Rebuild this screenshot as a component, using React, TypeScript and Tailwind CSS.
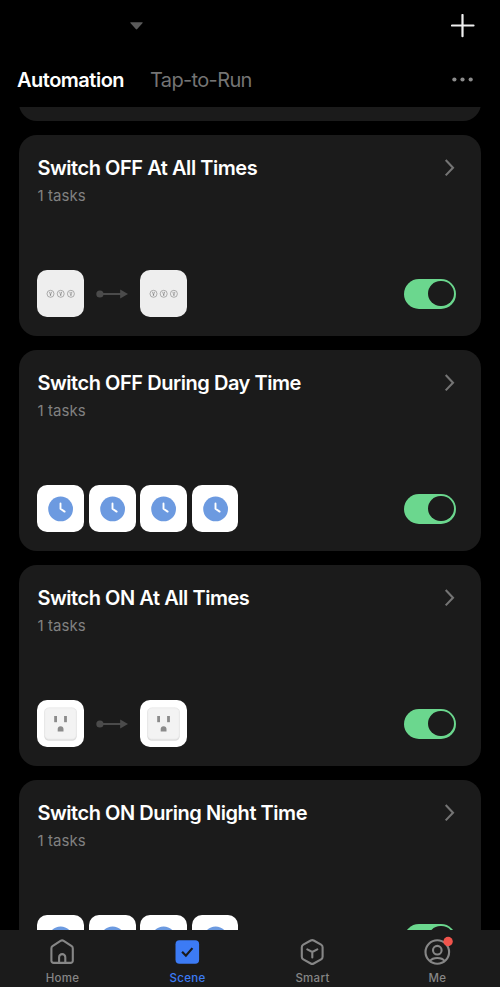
import { useState } from 'react'
import type { ReactNode } from 'react'
import { clsx } from 'clsx'

type TileKind = 'strip' | 'clock' | 'outlet'

interface Scene {
  id: string
  title: string
  tasks: number
  kind: TileKind
}

const SCENES: Scene[] = [
  { id: 'off-all', title: 'Switch OFF At All Times', tasks: 1, kind: 'strip' },
  { id: 'off-day', title: 'Switch OFF During Day Time', tasks: 1, kind: 'clock' },
  { id: 'on-all', title: 'Switch ON At All Times', tasks: 1, kind: 'outlet' },
  { id: 'on-night', title: 'Switch ON During Night Time', tasks: 1, kind: 'clock' },
]

function StripIcon() {
  return (
    <svg width="47" height="47" viewBox="0 0 47 47" fill="none">
      {[13.5, 23.7, 33.9].map((cx) => (
        <g key={cx}>
          <circle cx={cx} cy="23.8" r="3.5" stroke="#989898" strokeWidth="0.8" />
          <path d={`M${cx - 0.8} 21.900v1.600M${cx + 0.8} 21.900v1.600`} stroke="#999" strokeWidth="0.9" />
          <path d={`M${cx} 23.500v2.300`} stroke="#888" strokeWidth="1.2" />
        </g>
      ))}
    </svg>
  )
}

function ClockIcon() {
  return (
    <svg width="47" height="47" viewBox="0 0 47 47" fill="none">
      <circle cx="23.6" cy="23.9" r="12.4" fill="#6c9ae0" />
      <path d="M23.500 18.500v5.300l4.100 2.800" stroke="#fff" strokeWidth="1.9" strokeLinecap="round" strokeLinejoin="round" />
    </svg>
  )
}

function OutletIcon() {
  return (
    <svg width="47" height="47" viewBox="0 0 47 47" fill="none">
      <rect x="7.3" y="8" width="32.4" height="32.8" rx="4.5" fill="#dedede" />
      <rect x="7.6" y="7.8" width="31.8" height="31.4" rx="4.5" fill="#f3f3f3" stroke="#e6e6e6" strokeWidth="0.7" />
      <rect x="17.2" y="16" width="2.800" height="6.200" fill="#8b8b8b" />
      <rect x="27.1" y="16" width="2.800" height="6.200" fill="#8b8b8b" />
      <path d="M20.700 31.400v-2.300a2.900 2.900 0 0 1 5.800 0v2.300z" fill="#8b8b8b" />
    </svg>
  )
}

function Tile({ kind }: { kind: TileKind }) {
  return (
    <div
      className={clsx(
        'h-[47px] w-[46.8px] shrink-0 overflow-hidden rounded-[10px]',
        kind === 'strip' ? 'bg-[#eeeeee]' : 'bg-white'
      )}
    >
      {kind === 'strip' && <StripIcon />}
      {kind === 'clock' && <ClockIcon />}
      {kind === 'outlet' && <OutletIcon />}
    </div>
  )
}

function Arrow() {
  return (
    <svg width="32" height="12" viewBox="0 0 32 12" fill="#4b4b4b">
      <circle cx="3.9" cy="6" r="3.6" />
      <rect x="5" y="5" width="20" height="2" />
      <path d="M24.2 1.4v9.2l7.8-4.6z" />
    </svg>
  )
}

function Toggle({ on, onChange }: { on: boolean; onChange: () => void }) {
  return (
    <button
      role="switch"
      aria-checked={on}
      onClick={onChange}
      className={clsx(
        'flex h-[30px] w-[52.5px] items-center rounded-full px-[2.3px]',
        on ? 'justify-end bg-[#6bd78e]' : 'justify-start bg-[#4b4b4b]'
      )}
    >
      <span className="size-[25.4px] rounded-full bg-[#1b1b1b]" />
    </button>
  )
}

function SceneCard({ scene }: { scene: Scene }) {
  const [on, setOn] = useState(true)

  return (
    <article className="flex h-[201px] shrink-0 flex-col justify-between rounded-[18px] bg-[#1b1b1b] pt-[20px] pr-[25px] pb-[19px] pl-[18.4px]">
      <div className="flex items-start justify-between">
        <div>
          <h2 className="text-[20px] leading-[26px] font-semibold tracking-[-0.45px] text-white">{scene.title}</h2>
          <p className="mt-[5px] text-[15px] leading-5 tracking-[0.1px] text-[#818181]">{scene.tasks} tasks</p>
        </div>
        <svg width="12" height="18" viewBox="0 0 12 18" fill="none" className="mt-1">
          <path d="M1.700 1.100 9 8.700l-7.300 7.700" stroke="#747474" strokeWidth="2.100" />
        </svg>
      </div>

      <div className="flex items-center justify-between">
        {scene.kind === 'clock' ? (
          <div className="flex gap-[4.6px]">
            {[0, 1, 2, 3].map((i) => (
              <Tile key={i} kind="clock" />
            ))}
          </div>
        ) : (
          <div className="flex items-center gap-3">
            <Tile kind={scene.kind} />
            <Arrow />
            <Tile kind={scene.kind} />
          </div>
        )}
        <Toggle on={on} onChange={() => setOn(!on)} />
      </div>
    </article>
  )
}

function NavItem({ label, active, children }: { label: string; active?: boolean; children: ReactNode }) {
  return (
    <button
      className={clsx(
        'flex flex-1 flex-col items-center pt-[8px]',
        active ? 'text-[#3c7bf5]' : 'text-[#868686]'
      )}
    >
      {children}
      <span className="mt-[5px] text-[11.5px] leading-[14px] font-medium tracking-[0.3px]">{label}</span>
    </button>
  )
}

export default function App() {
  return (
    <div className="flex h-[987px] w-[500px] flex-col overflow-hidden bg-black font-['Inter',sans-serif]">
      <header className="flex h-[107px] shrink-0 flex-col">
        <div className="flex h-[52px] items-center justify-between pr-[25px] pl-[130px]">
          <svg width="13" height="8" viewBox="0 0 13 8" fill="#5a5a5a">
            <path d="M1 .3h11c.7 0 .9.5.4 1L7.200 7c-.4.5-1 .5-1.400 0L.6 1.300C.1.800.3.300 1 .300z" />
          </svg>
          <svg width="24" height="24" viewBox="0 0 24 24" stroke="#f0f0f0" strokeWidth="2.200" strokeLinecap="round">
            <path d="M11.500 1v21.200M1 11.500h21.500" />
          </svg>
        </div>
        <div className="flex h-[55px] items-center justify-between pr-[26px] pl-[17px]">
          <nav className="flex items-center gap-[26px] text-[20px] leading-6">
            <button className="font-semibold tracking-[-0.5px] text-white">Automation</button>
            <button className="tracking-[-0.65px] text-[#747474]">Tap-to-Run</button>
          </nav>
          <svg width="22" height="6" viewBox="0 0 22 6" fill="#8c8c8c">
            <circle cx="2.400" cy="2.500" r="2.100" />
            <circle cx="10.500" cy="2.500" r="2.100" />
            <circle cx="18.700" cy="2.500" r="2.100" />
          </svg>
        </div>
      </header>

      <main className="flex h-[823px] shrink-0 flex-col gap-[14px] overflow-hidden px-[19px]">
        {/* tail of the card that is scrolled away */}
        <div className="-mt-[187px] h-[201px] shrink-0 rounded-[18px] bg-[#1b1b1b]" />
        {SCENES.map((scene) => (
          <SceneCard key={scene.id} scene={scene} />
        ))}
      </main>

      <footer className="flex h-[57px] shrink-0 bg-[#1b1b1b]">
        <NavItem label="Home">
          <svg width="28" height="28" viewBox="0.9 0 28 28" fill="none" stroke="currentColor" strokeWidth="2.100" strokeLinejoin="round">
            <path d="M3.300 10.400c0-.9.400-1.700 1.100-2.200l8-5.300c1-.6 2.200-.6 3.200 0l8 5.300c.7.500 1.100 1.300 1.100 2.200v12.300a2.200 2.200 0 0 1-2.200 2.200h-17a2.200 2.200 0 0 1-2.200-2.200z" />
            <path d="M11 24.800v-5.600a3.100 3.100 0 0 1 6.200 0v5.600" />
          </svg>
        </NavItem>
        <NavItem label="Scene" active>
          <svg width="28" height="28" viewBox="0.9 0 28 28" fill="none">
            <rect x="2.400" y="2.200" width="23.600" height="23.600" rx="4" fill="currentColor" />
            <path d="m9 13.800 3.800 3.900 6.500-7.600" stroke="#1b1b1b" strokeWidth="2.200" />
          </svg>
        </NavItem>
        <NavItem label="Smart">
          <svg width="28" height="28" viewBox="0.9 0 28 28" fill="none" stroke="currentColor" strokeWidth="2.100" strokeLinejoin="round" strokeLinecap="round">
            <path d="M12.600 2.500a3 3 0 0 1 3 0l7.400 4.100a3 3 0 0 1 1.500 2.600v9.600a3 3 0 0 1-1.500 2.600l-7.400 4.100a3 3 0 0 1-3 0l-7.400-4.100a3 3 0 0 1-1.500-2.600V9.200a3 3 0 0 1 1.500-2.600z" />
            <path d="m9.200 11.400 5 2.600 5-2.600M14.200 14v5.400" />
          </svg>
        </NavItem>
        <NavItem label="Me">
          <svg width="28" height="28" viewBox="0.6 0 28 28" fill="none" stroke="currentColor" strokeWidth="2.100" className="overflow-visible">
            <circle cx="13.900" cy="14" r="11.800" />
            <circle cx="13.900" cy="12.200" r="4.300" />
            <path d="M6.600 23c1.400-2 4.200-3 7.300-3s5.900 1 7.300 3" />
            <circle cx="24.700" cy="3.500" r="4.700" fill="#f0544c" stroke="none" />
          </svg>
        </NavItem>
      </footer>
    </div>
  )
}
